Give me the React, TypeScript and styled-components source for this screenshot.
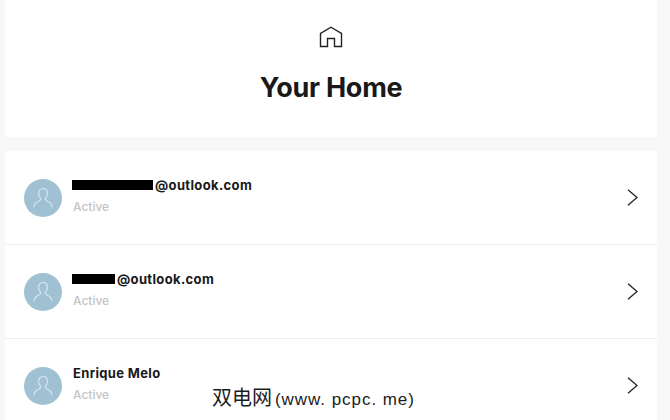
import React from "react";
import styled, { createGlobalStyle } from "styled-components";

const Global = createGlobalStyle`
  html, body { margin: 0; padding: 0; background: #f8f8f8; }
  body { width: 670px; height: 420px; overflow: hidden; font-family: "Inter", "Liberation Sans", sans-serif; }
`;

const Page = styled.div`
  position: relative;
  width: 652px;
  height: 420px;
  margin-left: 5px;
  display: flex;
  flex-direction: column;
  gap: 14px;
  overflow: hidden;
`;

const Header = styled.header`
  height: 137px;
  flex: none;
  background: #fff;
  display: flex;
  flex-direction: column;
  align-items: center;
  padding-top: 26px;
  box-sizing: border-box;
`;

const Title = styled.h1`
  margin: 23px 0 0;
  font-size: 27px;
  line-height: 34px;
  font-weight: 700;
  letter-spacing: -0.25px;
  color: #191919;
`;

const List = styled.div`
  display: flex;
  flex-direction: column;
  background: #fff;
  flex: 1;
`;

const Row = styled.div`
  height: 94px;
  flex: none;
  box-sizing: border-box;
  border-bottom: 1px solid #ececec;
  display: flex;
  align-items: center;
  padding: 0 18px 0 19px;

  &:last-child { border-bottom: 0; }
`;

const Avatar = styled.div`
  width: 38px;
  height: 38px;
  border-radius: 50%;
  background: #9fc1d3;
  display: flex;
  align-items: center;
  justify-content: center;
  flex: none;
`;

const Info = styled.div`
  margin-left: 11px;
  flex: 1;
  display: flex;
  flex-direction: column;
  gap: 6px;
  margin-top: -4px;
`;

const Name = styled.div`
  font-size: 13px;
  line-height: 16px;
  font-weight: 700;
  letter-spacing: 0.35px;
  color: #191919;
  display: flex;
  align-items: center;
`;

const Redaction = styled.span<{ $w: number }>`
  display: inline-block;
  width: ${(p) => p.$w}px;
  height: 10px;
  background: #000;
  margin-left: -1px;
  margin-right: 2px;
`;

const Status = styled.div`
  font-size: 12px;
  line-height: 16px;
  font-weight: 500;
  color: #c4c4c4;
`;

const Watermark = styled.div`
  position: absolute;
  left: 207px;
  top: 383px;
  font-family: "Noto Sans CJK SC", "Liberation Sans", sans-serif;
  font-size: 20px;
  line-height: 28px;
  color: #1c1c1c;
  white-space: nowrap;
`;

const WatermarkLatin = styled.span`
  font-family: "Liberation Sans", sans-serif;
  font-size: 17px;
  letter-spacing: 0.95px;
  margin-left: 3px;
`;

const HomeIcon = () => (
  <svg width="24" height="22" viewBox="0 0 24 22" fill="none" stroke="#222" strokeWidth="1.4">
    <path d="M1.5 20.5V7.5L12 1.2L22.5 7.5V20.5H15.5V12.5H8.5V20.5Z" strokeLinejoin="miter" />
  </svg>
);

const UserIcon = () => (
  <svg width="20" height="22" viewBox="0 0 20 22" fill="none" stroke="#dbe8ef" strokeWidth="1.1" strokeLinecap="round">
    <path d="M10 1.5C7.2 1.5 5.6 3.6 5.6 6.4C5.6 8.8 6.6 10.4 7.6 11.4C8 12.8 7 13.6 5.2 14.4C3 15.3 1.4 16.4 1 20" />
    <path d="M10 1.5C12.8 1.5 14.4 3.6 14.4 6.4C14.4 8.8 13.4 10.4 12.4 11.4C12 12.8 13 13.6 14.8 14.4C17 15.3 18.6 16.4 19 20" />
  </svg>
);

const Chevron = () => (
  <svg width="12" height="18" viewBox="0 0 12 18" fill="none" stroke="#222" strokeWidth="1.3">
    <path d="M1 0.7L10 8.5L1 16.3" />
  </svg>
);

const accounts = [
  { redact: 81, name: "@outlook.com" },
  { redact: 43, name: "@outlook.com" },
  { redact: 0, name: "Enrique Melo" },
];

export default function App() {
  return (
    <>
      <Global />
      <Page>
        <Header>
          <HomeIcon />
          <Title>Your Home</Title>
        </Header>
        <List>
          {accounts.map((a) => (
            <Row key={a.name + a.redact}>
              <Avatar>
                <UserIcon />
              </Avatar>
              <Info>
                <Name>
                  {a.redact > 0 && <Redaction $w={a.redact} />}
                  {a.name}
                </Name>
                <Status>Active</Status>
              </Info>
              <Chevron />
            </Row>
          ))}
        </List>
        <Watermark>
          双电网<WatermarkLatin>(www. pcpc. me)</WatermarkLatin>
        </Watermark>
      </Page>
    </>
  );
}
